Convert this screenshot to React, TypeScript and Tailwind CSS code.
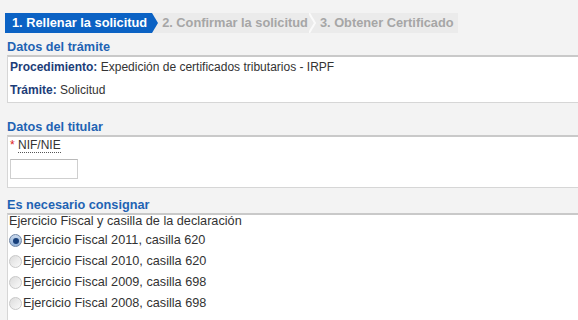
import React from "react";

const steps = [
  { label: "1. Rellenar la solicitud", active: true },
  { label: "2. Confirmar la solicitud", active: false },
  { label: "3. Obtener Certificado", active: false },
];

const ejercicios = [
  "Ejercicio Fiscal 2011, casilla 620",
  "Ejercicio Fiscal 2010, casilla 620",
  "Ejercicio Fiscal 2009, casilla 698",
  "Ejercicio Fiscal 2008, casilla 698",
];

const Radio = ({ checked }: { checked: boolean }) =>
  checked ? (
    <span className="mr-[1px] inline-flex h-[13px] w-[13px] shrink-0 items-center justify-center rounded-full border border-[#6f86a6] bg-gradient-to-b from-[#c9d8ec] to-[#8fb0d8]">
      <span className="h-[6px] w-[6px] rounded-full bg-[#173f7a]" />
    </span>
  ) : (
    <span className="mr-[1px] inline-block h-[13px] w-[13px] shrink-0 rounded-full border border-[#c8c8c8] bg-gradient-to-br from-[#dcdcdc] to-[#fafafa]" />
  );

const Section = ({
  title,
  children,
  className = "",
}: {
  title: string;
  children: React.ReactNode;
  className?: string;
}) => (
  <div className={className}>
    <h2 className="text-[12.7px] leading-[14px] font-bold text-[#1f63b3]">
      {title}
    </h2>
    <div className="mt-[1px] border border-r-0 border-[#d6d6d6] border-t-2 border-t-[#c9c9c9] bg-white">
      {children}
    </div>
  </div>
);

export default function App() {
  return (
    <div className="min-h-[320px] bg-[#f3f3f3] pl-[7px] text-[12px] text-[#333] font-['Liberation_Sans',Arial,sans-serif]">
      {/* pasos */}
      <div className="flex pt-[13px]">
        <div className="-ml-[2px] flex h-[20px] bg-[#ebebeb] pr-[3px] text-[12.8px] font-bold">
          {steps.map((s, i) => (
            <div key={i} className="flex items-center">
              <div
                className={
                  s.active
                    ? "flex h-full items-center bg-[#0b62c4] pl-[7px] pr-[5px] text-white"
                    : "flex h-full items-center pl-[4px] pr-[1px] text-[#a6a6a6]"
                }
              >
                {s.label}
              </div>
              {s.active ? (
                <span className="h-0 w-0 border-y-[10px] border-l-[6px] border-y-transparent border-l-[#0b62c4]" />
              ) : (
                i < steps.length - 1 && (
                  <svg width="7" height="20" viewBox="0 0 7 20">
                    <path d="M0 0 L6 10 L0 20" fill="none" stroke="#fafafa" strokeWidth="2" />
                  </svg>
                )
              )}
            </div>
          ))}
        </div>
      </div>

      <Section title="Datos del trámite" className="mt-[7px]">
        <div className="flex flex-col gap-[5px] pl-[2px] pb-[3px] pt-[1px]">
          <div className="leading-[18px]">
            <span className="font-bold text-[#1c3d78]">Procedimiento:</span>{" "}
            Expedición de certificados tributarios - IRPF
          </div>
          <div className="leading-[18px]">
            <span className="font-bold text-[#1c3d78]">Trámite:</span> Solicitud
          </div>
        </div>
      </Section>

      <Section title="Datos del titular" className="mt-[17px]">
        <div className="pl-[2px] pb-[8px]">
          <div className="leading-[16px]">
            <span className="text-[#d22]">*</span>{" "}
            <span className="border-b border-dotted border-[#555]">NIF/NIE</span>
          </div>
          <div className="mt-[6px] h-[20px] w-[68px] border border-[#cfcfcf] border-t-[#b9b9b9] bg-white" />
        </div>
      </Section>

      <Section title="Es necesario consignar" className="mt-[10px]">
        <div className="flex flex-col pl-[1px] pb-[20px] text-[12.7px]">
          <div className="mb-[3px] leading-[12px]">Ejercicio Fiscal y casilla de la declaración</div>
          {ejercicios.map((e, i) => (
            <label key={i} className="flex items-center leading-[21px]">
              <Radio checked={i === 0} />
              <span>{e}</span>
            </label>
          ))}
        </div>
      </Section>
    </div>
  );
}
